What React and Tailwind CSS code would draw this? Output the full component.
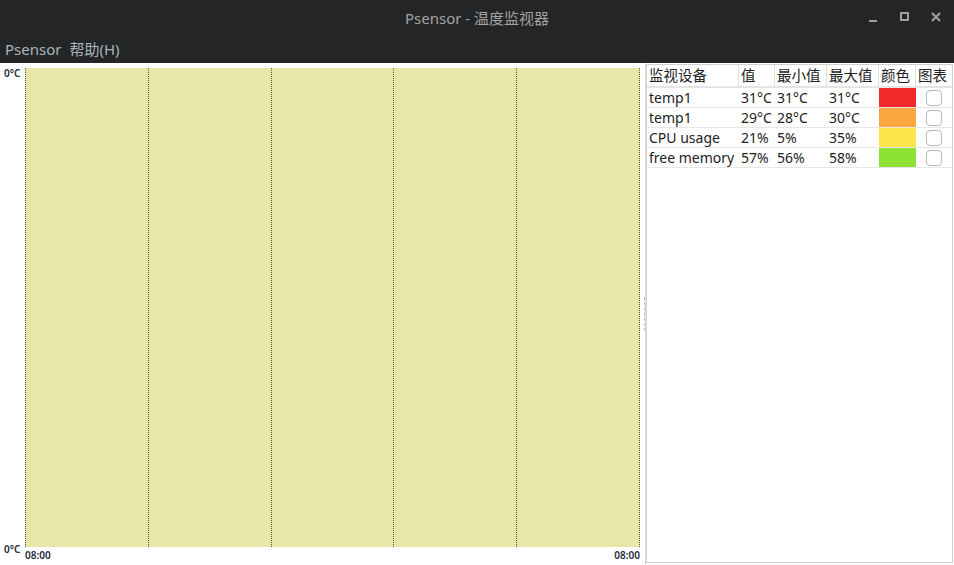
import { useState } from "react";

const FONT = { fontFamily: '"Noto Sans", "Noto Sans CJK SC", sans-serif' };

const rows = [
  { name: "temp1", val: "31°C", min: "31°C", max: "31°C", color: "bg-[#f02a2a]" },
  { name: "temp1", val: "29°C", min: "28°C", max: "30°C", color: "bg-[#fba63e]" },
  { name: "CPU usage", val: "21%", min: "5%", max: "35%", color: "bg-[#fde64b]" },
  { name: "free memory", val: "57%", min: "56%", max: "58%", color: "bg-[#8de234]" },
];

const TitleBar = () => (
  <div className="h-[36px] bg-[#242527] flex items-center relative">
    <div className="flex-1 text-center text-[15px] text-[#a3a3a3] pt-[1px]">
      Psensor - 温度监视器
    </div>
    <div className="absolute right-[12px] top-[11px] flex items-center gap-[19px]">
      <svg width="12" height="12" viewBox="0 0 12 12">
        <rect x="1" y="9" width="8" height="2" fill="#a0a0a0" />
      </svg>
      <svg width="12" height="12" viewBox="0 0 12 12">
        <rect x="2" y="2" width="7" height="7" fill="none" stroke="#a0a0a0" strokeWidth="2" />
      </svg>
      <svg width="12" height="12" viewBox="0 0 12 12">
        <path d="M2 2 L10 10 M10 2 L2 10" stroke="#a0a0a0" strokeWidth="2" />
      </svg>
    </div>
  </div>
);

const MenuBar = () => (
  <div className="h-[27px] bg-[#242527] flex items-center gap-[8px] px-[5px] text-[15px] text-[#a9b4be]">
    <span>Psensor</span>
    <span>帮助(H)</span>
  </div>
);

const Chart = () => (
  <div className="w-[643px] shrink-0 flex flex-col pt-[5px]">
    <div className="flex flex-1">
      <div className="w-[25px] flex flex-col justify-between text-[10px] font-semibold text-[#1f2a3a] pl-[4px] leading-none">
        <span>0°C</span>
        <span className="mb-[-7px]">0°C</span>
      </div>
      <div className="w-[615px] flex bg-[#e8e6a8] border-r border-dotted border-[#55543e]">
        {[0, 1, 2, 3, 4].map((i) => (
          <div key={i} className="flex-1 border-l border-dotted border-[#55543e]" />
        ))}
      </div>
    </div>
    <div className="h-[18px] flex justify-between pl-[25px] pr-[3px] text-[10px] font-semibold text-[#1f2a3a] leading-none pt-[3px]">
      <span>08:00</span>
      <span>08:00</span>
    </div>
  </div>
);

const Checkbox = ({ checked, onChange }) => (
  <button
    onClick={onChange}
    className="w-[16px] h-[16px] rounded-[4px] border border-[#b8b8b8] bg-white mx-auto block"
  >
    {checked && (
      <svg width="14" height="14" viewBox="0 0 14 14">
        <path d="M3 7 L6 10 L11 4" stroke="#333" strokeWidth="2" fill="none" />
      </svg>
    )}
  </button>
);

const SensorTable = () => {
  const [checks, setChecks] = useState([false, false, false, false]);
  const cols = ["w-[92px]", "w-[36px]", "w-[52px]", "w-[52px]", "w-[37px]", "w-[36px]"];
  const heads = ["监视设备", "值", "最小值", "最大值", "颜色", "图表"];
  return (
    <div className="flex-1 min-w-0 border border-[#d0d0d0] mt-[1px] mb-[2px] mr-[1px] bg-white text-[14px] text-[#222] whitespace-nowrap">
      <div className="flex h-[23px] border-b-2 border-[#e4e4e4] text-[14.5px]">
        {heads.map((h, i) => (
          <div
            key={h}
            className={`${cols[i]} shrink-0 px-[2px] flex items-center leading-none ${i < 5 ? "border-r border-[#e0e0e0]" : ""}`}
          >
            {h}
          </div>
        ))}
      </div>
      {rows.map((r, idx) => (
        <div key={idx} className="flex h-[20px] border-b border-[#e6e6e6]">
          <div className={`${cols[0]} shrink-0 px-[2px] flex items-center leading-none`}>{r.name}</div>
          <div className={`${cols[1]} shrink-0 px-[2px] flex items-center leading-none`}>{r.val}</div>
          <div className={`${cols[2]} shrink-0 px-[2px] flex items-center leading-none`}>{r.min}</div>
          <div className={`${cols[3]} shrink-0 px-[2px] flex items-center leading-none`}>{r.max}</div>
          <div className={`${cols[4]} shrink-0 ${r.color}`} />
          <div className={`${cols[5]} shrink-0 flex items-center`}>
            <Checkbox
              checked={checks[idx]}
              onChange={() => setChecks(checks.map((c, j) => (j === idx ? !c : c)))}
            />
          </div>
        </div>
      ))}
    </div>
  );
};

export default function App() {
  return (
    <div className="w-[954px] h-[565px] flex flex-col bg-white overflow-hidden" style={FONT}>
      <TitleBar />
      <MenuBar />
      <div className="flex-1 flex bg-white">
        <Chart />
        <div className="w-[3px] shrink-0 flex items-center justify-center border-r border-[#dcdcdc]">
          <div className="h-[34px] border-l border-dashed border-[#c0c0c0]" />
        </div>
        <SensorTable />
      </div>
    </div>
  );
}
